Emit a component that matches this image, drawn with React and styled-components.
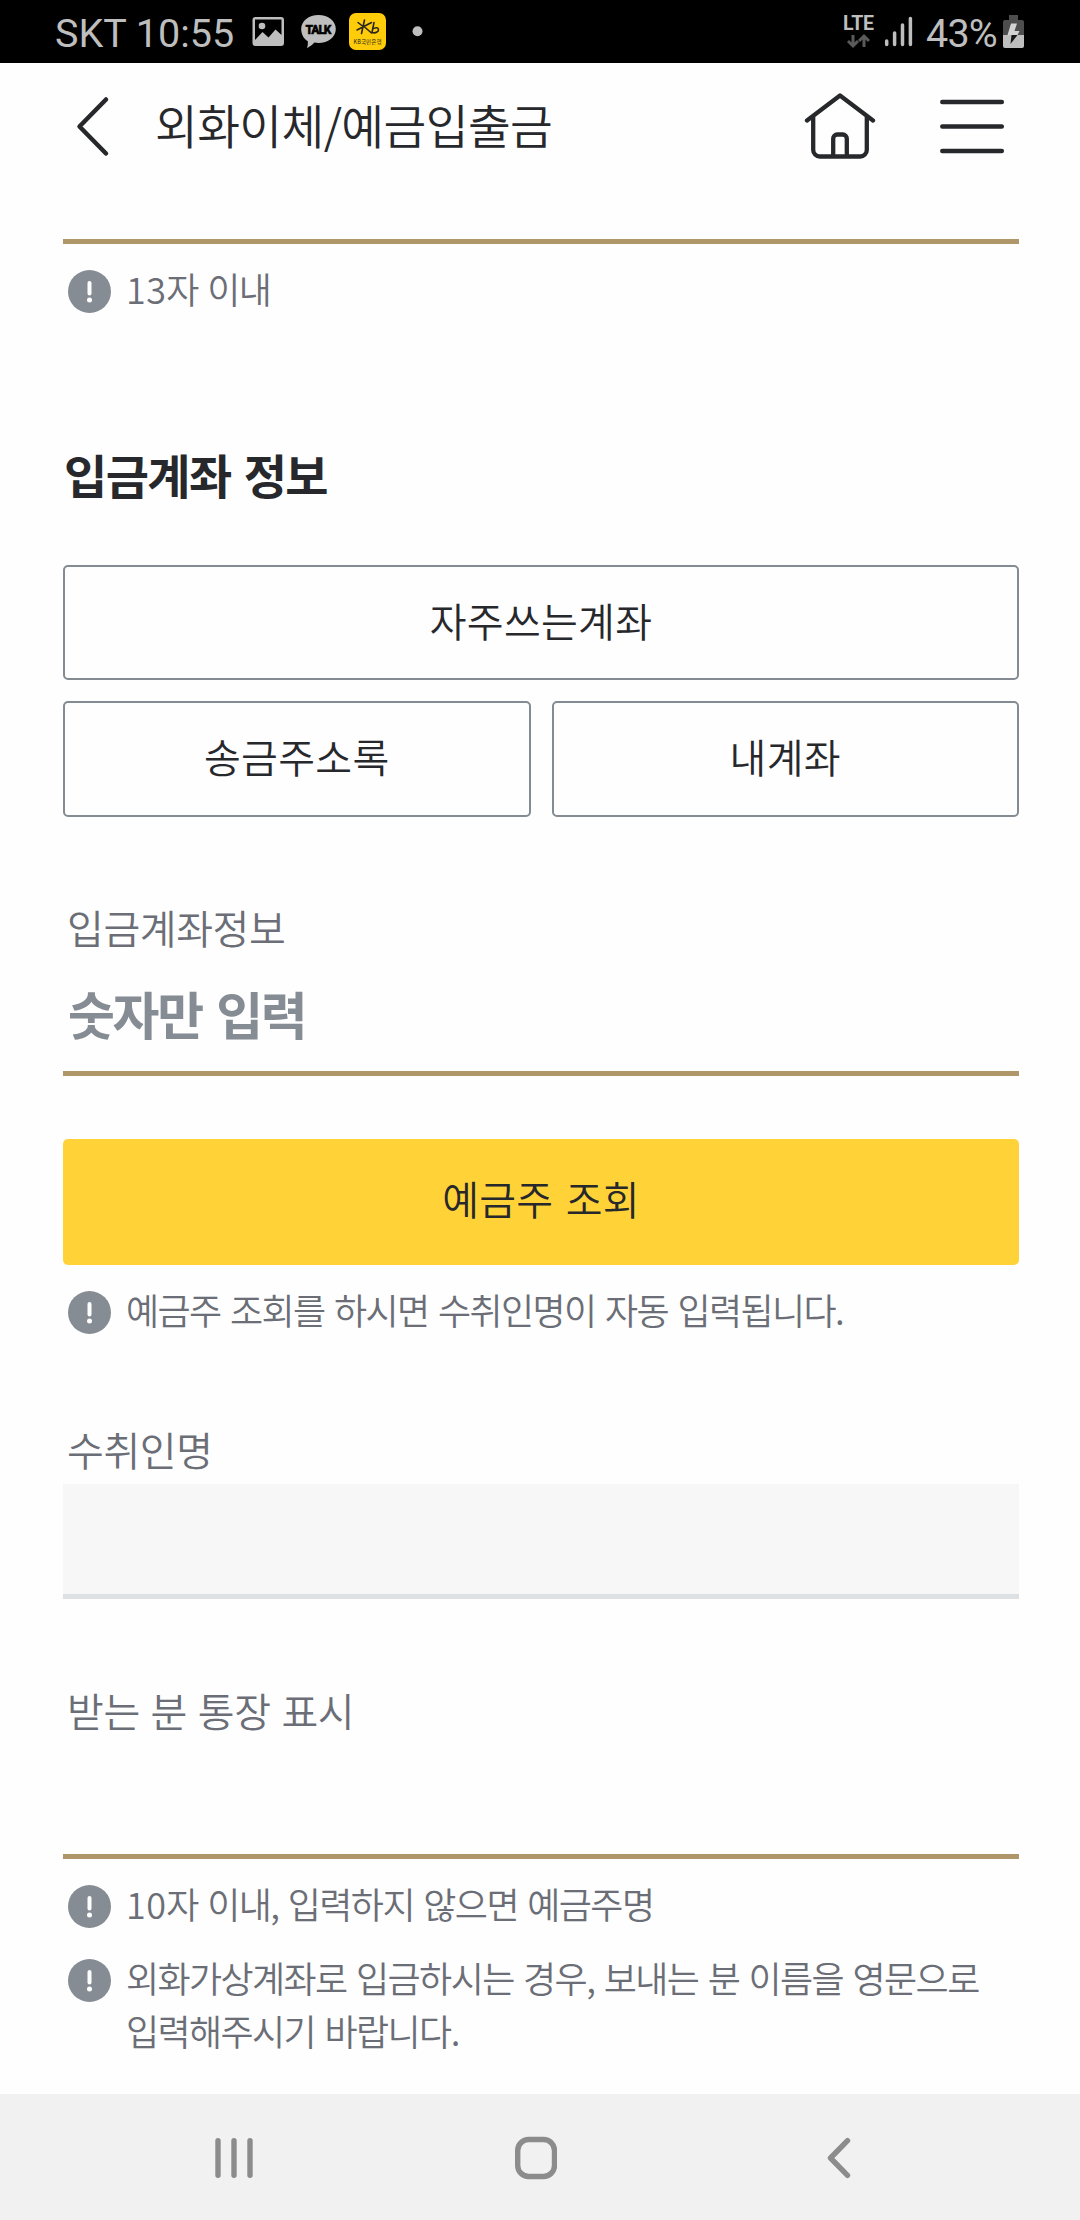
import styled, { createGlobalStyle } from 'styled-components';


const GlobalStyle = createGlobalStyle`
    * {
        box-sizing: border-box;
    }
    body {
        margin: 0;
        background-color: #fff;
        font-family: 'Noto Sans CJK KR', 'Noto Sans', sans-serif;
        font-weight: 350;
        color: #27282c;
    }
`
const Screen = styled.div`
    width: 1080px;
    height: 2220px;
    display: flex;
    flex-direction: column;
    overflow: hidden;
    background-color: #fefefe;
`
const StatusBar = styled.header`
    height: 63px;
    flex-shrink: 0;
    display: flex;
    justify-content: space-between;
    align-items: center;
    padding: 0 56px 0 55px;
    background-color: #000;
    color: #bebebe;
    font-family: Roboto, sans-serif;
    font-weight: 400;
`
const StatusGroup = styled.div`
    display: flex;
    align-items: center;
    svg {
        display: block;
    }
`
const StatusText = styled.span`
    font-size: 39.5px;
    line-height: 63px;
    padding-top: 4px;
    letter-spacing: ${({ $spacing }) => $spacing || '0'};
    white-space: nowrap;
`
const StatusIcons = styled.div`
    display: flex;
    align-items: center;
    margin-left: 17px;
`
const SignalIcons = styled.div`
    margin-right: 13px;
`
const BatteryIcon = styled.div`
    margin-left: 6px;
`
const TopBar = styled.div`
    height: 127px;
    flex-shrink: 0;
    display: flex;
    align-items: center;
    padding: 0 74px 0 75px;
    svg {
        display: block;
        fill: none;
        stroke: #27282c;
        stroke-linecap: round;
        stroke-linejoin: round;
    }
`
const PageTitle = styled.h1`
    flex: 1;
    margin: 0 0 0 45px;
    padding-bottom: 6px;
    font-size: 46.5px;
    font-weight: 350;
    line-height: 70px;
    letter-spacing: -0.6px;
    white-space: nowrap;
`
const TopActions = styled.div`
    display: flex;
    align-items: center;
    gap: 62px;
`
const Content = styled.main`
    flex: 1;
    display: flex;
    flex-direction: column;
    padding: 49px 61px 0 63px;
`
const Underline = styled.div`
    height: 5px;
    background-color: #af976a;
`
const Hint = styled.div`
    display: flex;
    align-items: flex-start;
    margin-top: 18px;
    padding: 0 0 3px 5px;
    svg {
        display: block;
        flex-shrink: 0;
        margin-top: 8px;
    }
`
const HintText = styled.p`
    margin: 0 0 0 15px;
    font-size: 36px;
    line-height: 53px;
    letter-spacing: -1.6px;
    word-spacing: 3px;
    color: #6b6e76;
    white-space: nowrap;
`
const Digits = styled.span`
    letter-spacing: 0.4px;
`
const SectionTitle = styled.h2`
    margin: 121px 0 56px 1px;
    font-size: 47px;
    font-weight: 700;
    line-height: 70px;
    letter-spacing: -1.6px;
    word-spacing: 4px;
`
const ButtonGrid = styled.div`
    display: grid;
    grid-template-columns: 1fr 1fr;
    grid-template-rows: 115px 116px;
    gap: 21px;
`
const OutlineButton = styled.button`
    grid-column: ${({ $wide }) => ($wide ? '1 / -1' : 'auto')};
    padding: 0 0 6px;
    border: 2px solid #858b93;
    border-radius: 5px;
    background-color: #fefefe;
    font: inherit;
    font-size: 40px;
    letter-spacing: 0.3px;
    color: #27282c;
`
const Label = styled.label`
    margin: ${({ $margin }) => $margin};
    font-size: 40px;
    line-height: 58px;
    letter-spacing: -0.4px;
    word-spacing: 2.3px;
    color: #6b6e76;
`
const Placeholder = styled.div`
    margin: 19px 0 20px 5px;
    font-size: 51px;
    font-weight: 700;
    line-height: 76px;
    letter-spacing: -2.3px;
    word-spacing: 5px;
    color: #858c94;
`
const PrimaryButton = styled.button`
    height: 126px;
    margin-top: 63px;
    padding: 0 0 9px;
    border: 0;
    border-radius: 5px;
    background-color: #ffd338;
    font: inherit;
    font-size: 40px;
    letter-spacing: 0.3px;
    word-spacing: 3px;
    color: #27282c;
`
const DisabledField = styled.div`
    height: 115px;
    background-color: #f7f7f7;
    border-bottom: 5px solid #dee1e4;
`
const NavBar = styled.nav`
    height: 126px;
    flex-shrink: 0;
    display: flex;
    justify-content: space-between;
    align-items: center;
    padding: 2px 229px 0 215px;
    background-color: #f1f1f1;
    svg {
        display: block;
        fill: none;
        stroke: #8c8c8c;
        stroke-width: 5.4;
        stroke-linecap: round;
        stroke-linejoin: round;
    }
    svg:nth-child(2) {
        margin-right: 8px;
    }
`
const NotificationIcons = () => (
    <svg width="172" height="63" viewBox="251 0 172 63">
        <path fill="#bebebe" fillRule="evenodd" d="M255.500 17h25.500a3 3 0 0 1 3 3v23a3 3 0 0 1-3 3h-25.500a3 3 0 0 1-3-3V20a3 3 0 0 1 3-3ZM255 19.500V40l7.500-8 6 5.500 7-8 6 5.500V19.500Z" />
        <circle cx="262" cy="26" r="3.300" fill="#bebebe" />
        <path fill="#bebebe" d="M318.500 15c9.700 0 17.300 6 17.300 14s-7.600 14-17.300 14c-1.300 0-2.700-.1-4-.4-2 2-4.300 4-7.500 5.700.8-2.500 1-4.700.8-7-4.100-2.600-6.600-6.900-6.600-12.300 0-8 7.600-14 17.300-14Z" />
        <text x="318.500" y="34" textAnchor="middle" fill="#000" stroke="#000" strokeWidth=".4" fontFamily="Roboto, sans-serif" fontSize="12" fontWeight="900" textLength="26">TALK</text>
        <rect x="349" y="13" width="37" height="37" rx="7" fill="#ffcc0a" />
        <path fill="none" stroke="#29251d" strokeWidth="1.600" strokeLinecap="round" d="M364.500 20 361.500 33.500M358 22.500l5 4M357 30l14.500-7.500M364 26.500l7.500 6.500M374 22.500 372 32.500c3.500 1 6.500-.5 6.500-2.800s-3-2.800-6-.5" />
        <text x="367.500" y="44" textAnchor="middle" fill="#29251d" fontFamily="'Noto Sans CJK KR', sans-serif" fontSize="5.500" fontWeight="400" textLength="28">KB국민은행</text>
        <circle cx="417.500" cy="31.300" r="5" fill="#bebebe" />
    </svg>
)

const NetworkIcon = () => (
    <svg width="70" height="63" viewBox="842 0 70 63">
        <text x="842" y="30" fill="#bebebe" fontFamily="Roboto, sans-serif" fontSize="19.500" fontWeight="700" textLength="31">LTE</text>
        <path fill="none" stroke="#5a5a5a" strokeWidth="3" d="M852 35v11M847 41l5 5 5-5M863 47V36M858 41l5-5 5 5" />
        <path stroke="#bebebe" strokeWidth="3.500" strokeLinecap="round" d="M885.700 41v3.500M893.600 33v11.500M901.500 25v19.500M909.400 18.500v26" />
    </svg>
)

const Battery = () => (
    <svg width="21" height="63" viewBox="1003 0 21 63">
        <path fill="#4d4d4d" d="M1009 15h9v5h4a2 2 0 0 1 2 2v13h-21V22a2 2 0 0 1 2-2h4Z" />
        <path fill="#bebebe" d="M1003 35h21v11a2 2 0 0 1-2 2h-17a2 2 0 0 1-2-2Z" />
        <path fill="#d2d2d2" d="M1011 23.500h6l-2.500 7.500h5l-2 4h-10Z" />
        <path fill="#161616" d="M1011.500 35h6l-7 9Z" />
    </svg>
)

const NoticeIcon = () => (
    <svg width="43" height="43" viewBox="0 0 43 43">
        <circle cx="21.500" cy="21.500" r="21.500" fill="#858c94" />
        <path stroke="#fff" strokeWidth="4" strokeLinecap="round" d="M21.500 13v10.500" />
        <circle cx="21.500" cy="30" r="2.500" fill="#fff" />
    </svg>
)

const Notice = ({ children }) => (
    <Hint>
        <NoticeIcon />
        <HintText>{children}</HintText>
    </Hint>
)

const App = () => {
  return (
      <Screen>
          <GlobalStyle />
          <StatusBar>
              <StatusGroup>
                  <StatusText>SKT 10:55</StatusText>
                  <StatusIcons>
                      <NotificationIcons />
                  </StatusIcons>
              </StatusGroup>
              <StatusGroup>
                  <SignalIcons>
                      <NetworkIcon />
                  </SignalIcons>
                  <StatusText $spacing='-0.8px'>43%</StatusText>
                  <BatteryIcon>
                      <Battery />
                  </BatteryIcon>
              </StatusGroup>
          </StatusBar>
          <TopBar>
              <svg width="35" height="63" viewBox="75 95 35 63" strokeWidth="4.500">
                  <path d="M106 99.500 79.500 126.500 106 153.500" />
              </svg>
              <PageTitle>외화이체/예금입출금</PageTitle>
              <TopActions>
                  <svg width="72" height="68" viewBox="804 93 72 68" strokeWidth="4.300">
                      <path d="M807 120.500 840 95.500l33 25M813.200 117v33a6.500 6.500 0 0 0 6.500 6.500h40.600a6.500 6.500 0 0 0 6.500-6.500v-33M833.200 156v-17.500a4 4 0 0 1 4-4h5.600a4 4 0 0 1 4 4V156" />
                  </svg>
                  <svg width="68" height="63" viewBox="938 95 68 63" strokeWidth="4.500">
                      <path d="M942.300 102h59.500M942.300 126.500h59.500M942.300 151h59.500" />
                  </svg>
              </TopActions>
          </TopBar>
          <Content>
              <Underline />
              <Notice><Digits>13</Digits>자 이내</Notice>
              <SectionTitle>입금계좌 정보</SectionTitle>
              <ButtonGrid>
                  <OutlineButton $wide>자주쓰는계좌</OutlineButton>
                  <OutlineButton>송금주소록</OutlineButton>
                  <OutlineButton>내계좌</OutlineButton>
              </ButtonGrid>
              <Label $margin='81px 0 0 4px'>입금계좌정보</Label>
              <Placeholder>숫자만 입력</Placeholder>
              <Underline />
              <PrimaryButton>예금주 조회</PrimaryButton>
              <Notice>예금주 조회를 하시면 수취인명이 자동 입력됩니다.</Notice>
              <Label $margin='81px 0 6px 4px'>수취인명</Label>
              <DisabledField />
              <Label $margin='82px 0 115px 4px'>받는 분 통장 표시</Label>
              <Underline />
              <Notice><Digits>10</Digits>자 이내, 입력하지 않으면 예금주명</Notice>
              <Notice>
                  외화가상계좌로 입금하시는 경우, 보내는 분 이름을 영문으로
                  <br />
                  입력해주시기 바랍니다.
              </Notice>
          </Content>
          <NavBar>
              <svg width="38" height="44" viewBox="215 2136 38 44">
                  <path d="M218 2140.700v34.600M234 2140.700v34.600M250 2140.700v34.600" />
              </svg>
              <svg width="42" height="44" viewBox="515 2136 42 44">
                  <rect x="517.700" y="2139.500" width="36.800" height="37" rx="11" />
              </svg>
              <svg width="24" height="44" viewBox="827 2136 24 44">
                  <path d="M847.500 2140.700 830.500 2158l17 17.300" />
              </svg>
          </NavBar>
      </Screen>
  )
}

export default App
